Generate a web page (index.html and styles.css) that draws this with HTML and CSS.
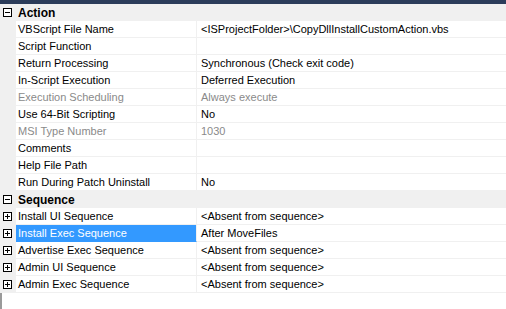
FILE: index.html
```html
<!DOCTYPE html>
<html>
<head>
<meta charset="utf-8">
<link rel="stylesheet" href="styles.css">
</head>
<body>
<div class="topbar"></div>
<div class="grid">
  <div class="cat"><span class="box minus"></span><span class="catname">Action</span></div>
  <div class="row"><span class="gut"></span><span class="name">VBScript File Name</span><span class="val">&lt;ISProjectFolder&gt;\CopyDllInstallCustomAction.vbs</span></div>
  <div class="row"><span class="gut"></span><span class="name">Script Function</span><span class="val"></span></div>
  <div class="row"><span class="gut"></span><span class="name">Return Processing</span><span class="val">Synchronous (Check exit code)</span></div>
  <div class="row"><span class="gut"></span><span class="name">In-Script Execution</span><span class="val">Deferred Execution</span></div>
  <div class="row dis"><span class="gut"></span><span class="name">Execution Scheduling</span><span class="val">Always execute</span></div>
  <div class="row"><span class="gut"></span><span class="name">Use 64-Bit Scripting</span><span class="val">No</span></div>
  <div class="row dis"><span class="gut"></span><span class="name">MSI Type Number</span><span class="val">1030</span></div>
  <div class="row"><span class="gut"></span><span class="name">Comments</span><span class="val"></span></div>
  <div class="row"><span class="gut"></span><span class="name">Help File Path</span><span class="val"></span></div>
  <div class="row"><span class="gut"></span><span class="name">Run During Patch Uninstall</span><span class="val">No</span></div>
  <div class="cat"><span class="box minus"></span><span class="catname">Sequence</span></div>
  <div class="row"><span class="gut"><span class="box plus"></span></span><span class="name">Install UI Sequence</span><span class="val">&lt;Absent from sequence&gt;</span></div>
  <div class="row sel"><span class="gut"><span class="box plus"></span></span><span class="name">Install Exec Sequence</span><span class="val">After MoveFiles</span></div>
  <div class="row"><span class="gut"><span class="box plus"></span></span><span class="name">Advertise Exec Sequence</span><span class="val">&lt;Absent from sequence&gt;</span></div>
  <div class="row"><span class="gut"><span class="box plus"></span></span><span class="name">Admin UI Sequence</span><span class="val">&lt;Absent from sequence&gt;</span></div>
  <div class="row"><span class="gut"><span class="box plus"></span></span><span class="name">Admin Exec Sequence</span><span class="val">&lt;Absent from sequence&gt;</span></div>
  <div class="rest"></div>
</div>
</body>
</html>
```
FILE: styles.css
```css
html, body {
  margin: 0;
  padding: 0;
  background: #ffffff;
  width: 506px;
  height: 309px;
  overflow: hidden;
  font-family: "Liberation Sans", Arial, sans-serif;
  font-size: 11px;
  color: #000;
}
.topbar {
  height: 4px;
  background: #2b3c5a;
}
.grid {
  display: flex;
  flex-direction: column;
}
.cat {
  height: 17px;
  background: #f0f0f0;
  display: flex;
  align-items: center;
}
.catname {
  font-weight: bold;
  font-size: 12px;
  padding-left: 6px;
}
.row {
  height: 17px;
  display: grid;
  grid-template-columns: 16px 181px 1fr;
}
.gut {
  background: #f0f0f0;
  display: flex;
  align-items: center;
}
.name {
  padding-left: 2px;
  line-height: 16px;
  border-bottom: 1px solid #f0f0f0;
  border-right: 1px solid #f0f0f0;
  white-space: nowrap;
}
.val {
  padding-left: 4px;
  line-height: 16px;
  border-bottom: 1px solid #f0f0f0;
  white-space: nowrap;
}
.dis .name, .dis .val {
  color: #8a8a8a;
}
.sel .name {
  background: #3399ff;
  color: #fff;
  border-bottom-color: #3399ff;
}
.rest {
  height: 16px;
  width: 2px;
  background: #9a9a9a;
}
.box {
  width: 7px;
  height: 7px;
  border: 1px solid #000;
  background: #fff;
  margin-left: 3px;
  position: relative;
  flex: none;
}
.box::before {
  content: "";
  position: absolute;
  left: 1px;
  top: 3px;
  width: 5px;
  height: 1px;
  background: #000;
}
.plus::after {
  content: "";
  position: absolute;
  left: 3px;
  top: 1px;
  width: 1px;
  height: 5px;
  background: #000;
}
```
